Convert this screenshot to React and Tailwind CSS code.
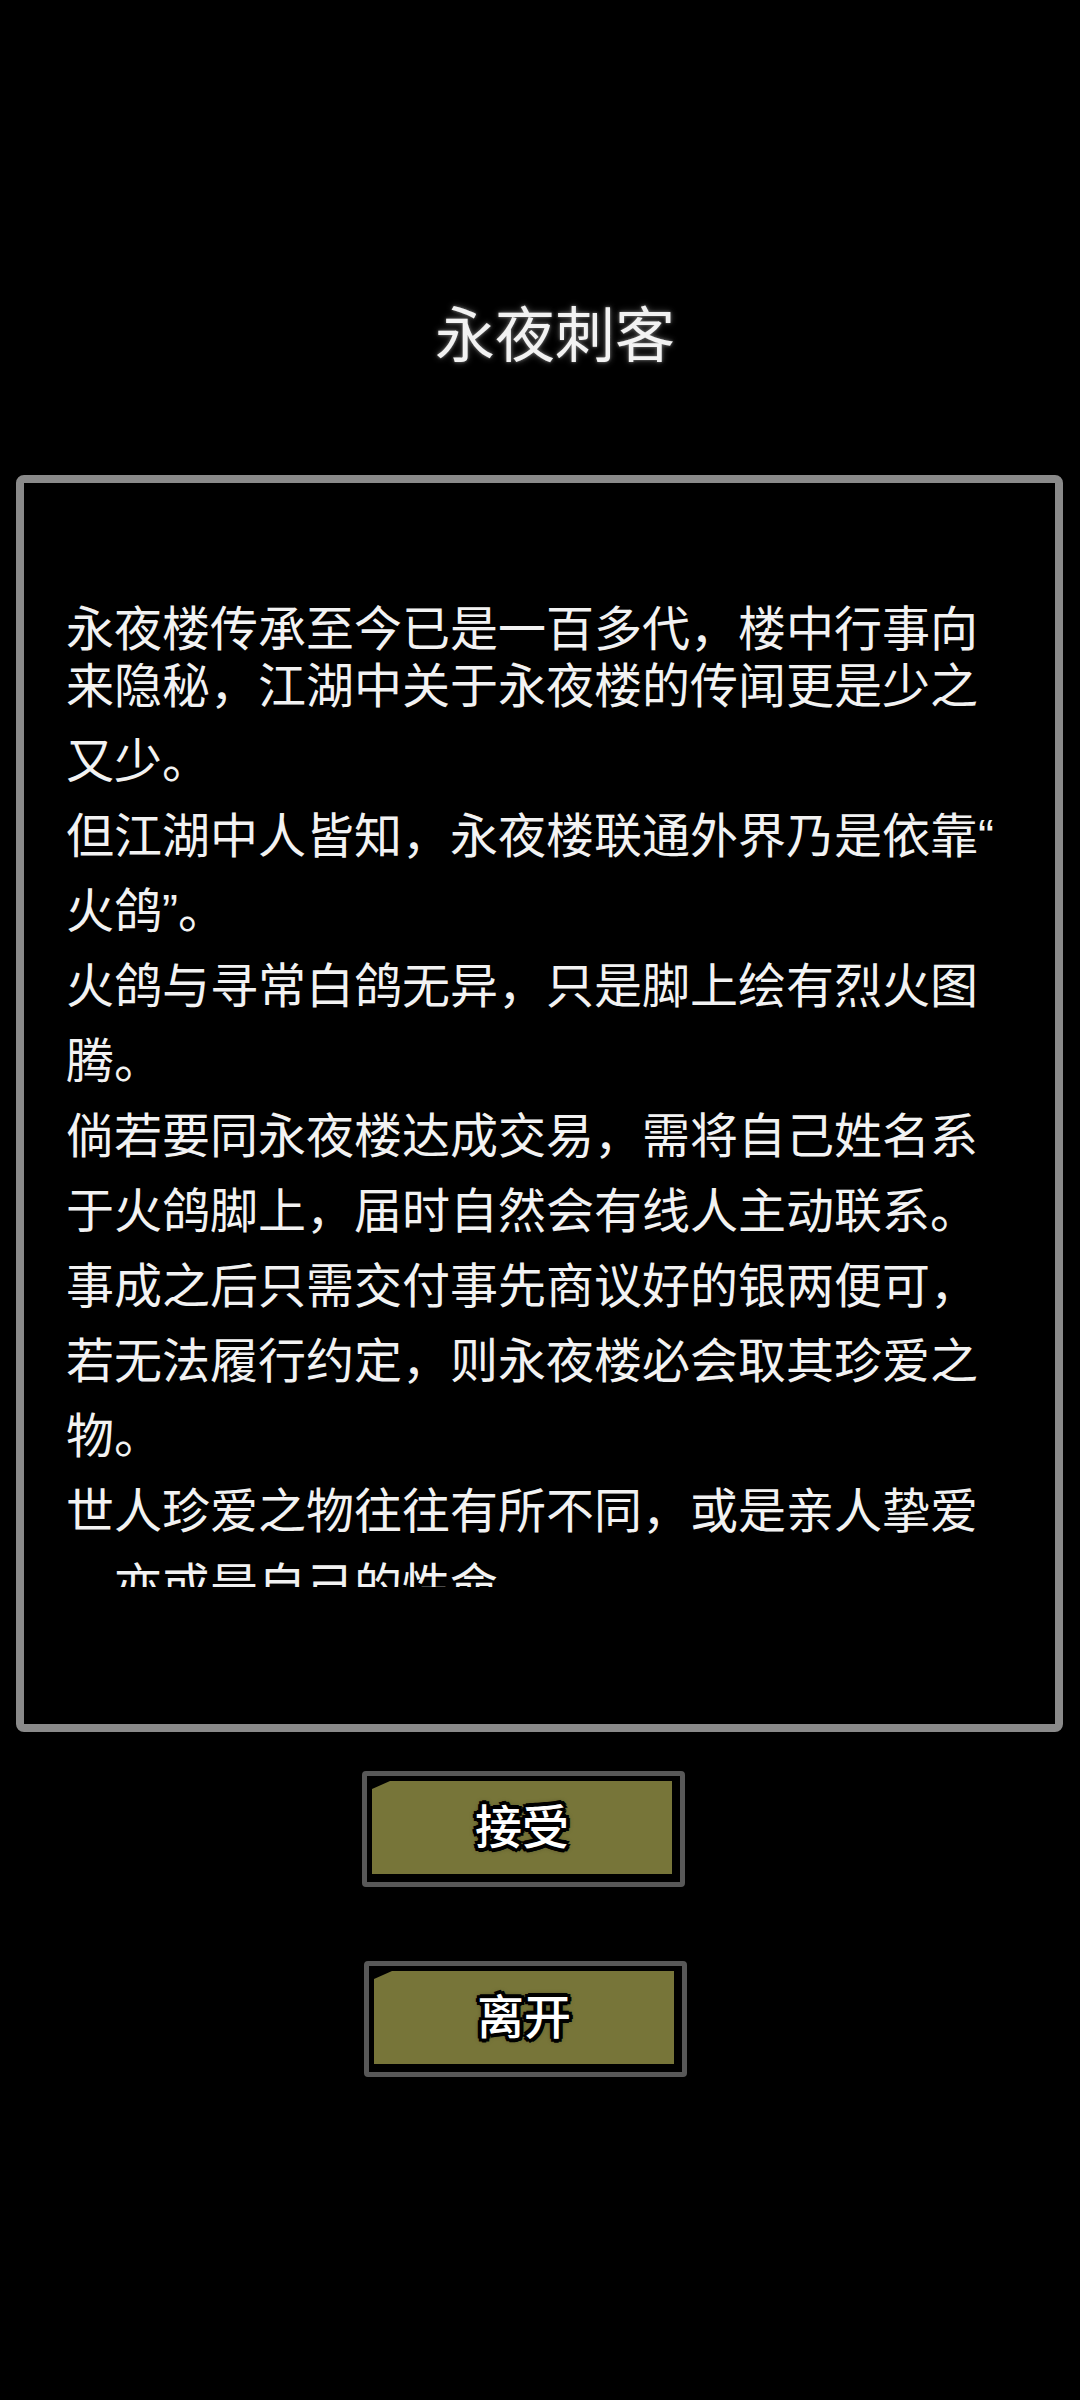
export default function App() {
  const lines = [
    "永夜楼传承至今已是一百多代，楼中行事向",
    "来隐秘，江湖中关于永夜楼的传闻更是少之",
    "又少。",
    "但江湖中人皆知，永夜楼联通外界乃是依靠“",
    "火鸽”。",
    "火鸽与寻常白鸽无异，只是脚上绘有烈火图",
    "腾。",
    "倘若要同永夜楼达成交易，需将自己姓名系",
    "于火鸽脚上，届时自然会有线人主动联系。",
    "事成之后只需交付事先商议好的银两便可，",
    "若无法履行约定，则永夜楼必会取其珍爱之",
    "物。",
    "世人珍爱之物往往有所不同，或是亲人挚爱",
    "，亦或是自己的性命。",
  ];
  return (
    <div className="w-[1080px] min-h-[2400px] bg-black font-['Liberation_Sans','Noto_Sans_CJK_SC',sans-serif] text-[#f2f2f2]">
      <div className="pt-[304px] pl-[30px] text-center text-[60px] leading-[66px] [text-shadow:0_0_3px_#777,0_0_7px_#555]">
        永夜刺客
      </div>
      <div className="mt-[105px] ml-[16px] w-[1047px] h-[1257px] box-border border-8 border-[#8a8a8a] rounded-[8px] bg-black">
        <div className="mt-[109px] h-[995px] overflow-hidden pl-[42px] text-[48px] leading-[75px]">
          {lines.map((l, i) => (
            <div
              key={i}
              className={i === 0 ? "h-[57px] whitespace-nowrap" : "h-[75px] whitespace-nowrap"}
            >
              {l}
            </div>
          ))}
        </div>
      </div>
      <div className="flex flex-col items-start">
        <Btn className="mt-[39px] ml-[362px]" label="接受" />
        <Btn className="mt-[74px] ml-[364px]" label="离开" />
      </div>
    </div>
  );
}

function Btn({ className, label }) {
  return (
    <div
      className={
        className +
        " box-border w-[323px] h-[116px] border-[5px] border-[#585858] rounded-[4px] bg-black pt-[5px] pl-[5px] pr-[8px] pb-[8px]"
      }
    >
      <div className="w-full h-full bg-[#777539] [clip-path:polygon(18px_0,100%_0,100%_100%,0_100%,0_8px)] flex items-center justify-center">
        <span className="text-[47px] leading-none font-medium text-white [text-shadow:4px_0_0_#000,-4px_0_0_#000,0_4px_0_#000,0_-4px_0_#000,3px_3px_0_#000,-3px_-3px_0_#000,3px_-3px_0_#000,-3px_3px_0_#000,0_0_6px_#000]">
          {label}
        </span>
      </div>
    </div>
  );
}
